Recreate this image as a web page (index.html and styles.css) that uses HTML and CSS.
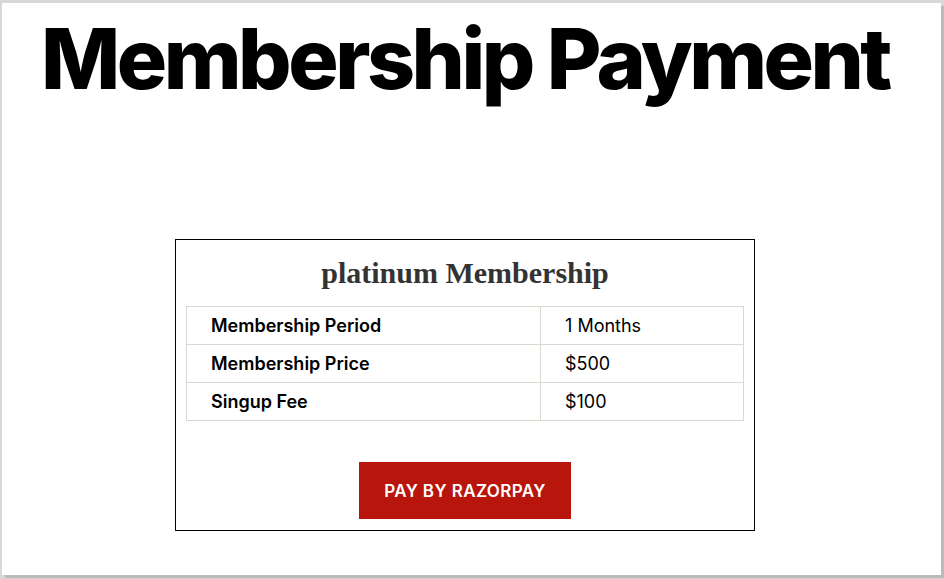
FILE: index.html
```html
<!DOCTYPE html>
<html>
<head>
<meta charset="utf-8">
<link rel="stylesheet" href="styles.css">
</head>
<body>
<div class="page">
  <h1 class="title">Membership Payment</h1>
  <div class="card">
    <h2 class="card-title">platinum Membership</h2>
    <table class="details">
      <tr><th>Membership Period</th><td>1 Months</td></tr>
      <tr><th>Membership Price</th><td>$500</td></tr>
      <tr><th>Singup Fee</th><td>$100</td></tr>
    </table>
    <div class="actions">
      <button class="pay-btn">PAY BY RAZORPAY</button>
    </div>
  </div>
</div>
</body>
</html>
```
FILE: styles.css
```css
html, body {
  margin: 0;
  padding: 0;
}
body {
  background: #dad7d7;
  width: 944px;
  height: 579px;
  overflow: hidden;
}
.page {
  box-sizing: border-box;
  margin: 3px 0 0 2px;
  width: 939px;
  height: 572px;
  background: #fff;
  box-shadow: 3px 3px 1px #bdbaba;
  padding: 0 13px 0 0;
  font-family: Inter, "Liberation Sans", sans-serif;
  color: #000;
}
.title {
  margin: 0;
  padding-top: 6px;
  text-align: center;
  font-family: Inter, sans-serif;
  font-weight: 800;
  font-size: 84px;
  line-height: 100px;
  letter-spacing: -3.5px;
  color: #000;
}
.card {
  box-sizing: border-box;
  width: 580px;
  margin: 130px auto 0;
  border: 1px solid #000;
  padding: 10px 10px 11px;
}
.card-title {
  margin: 0;
  text-align: center;
  font-family: "Liberation Serif", serif;
  font-weight: 700;
  font-size: 30px;
  line-height: 46px;
  color: #333;
  padding-bottom: 10px;
}
.details {
  width: 100%;
  border-collapse: collapse;
  font-size: 18px;
}
.details th, .details td {
  border: 1px solid #ddd8cf;
  padding: 0 24px;
  height: 37px;
  text-align: left;
}
.details th {
  width: 305px;
  font-weight: 600;
}
.details td {
  font-weight: 400;
}
.actions {
  display: flex;
  justify-content: center;
  padding-top: 41px;
}
.pay-btn {
  background: #b8160c;
  color: #fff;
  border: 0;
  width: 212px;
  height: 57px;
  font-family: Inter, sans-serif;
  font-size: 17px;
  font-weight: 600;
  letter-spacing: 0.4px;
}
```
